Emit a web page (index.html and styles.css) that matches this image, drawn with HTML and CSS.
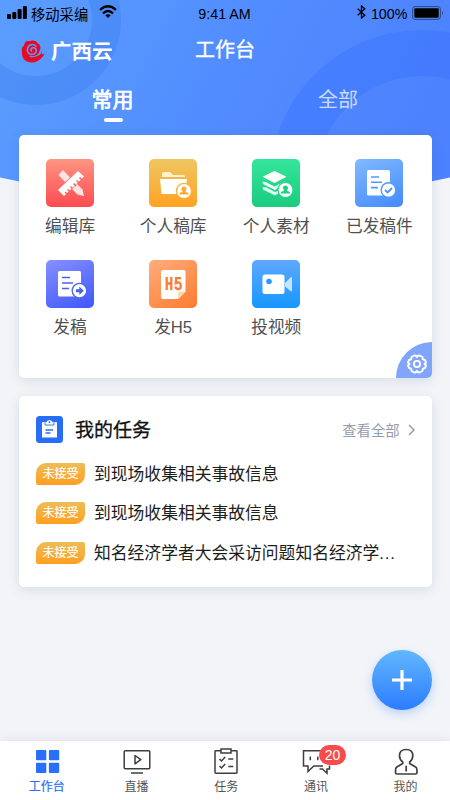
FILE: index.html
```html
<!DOCTYPE html>
<html lang="zh-CN">
<head>
<meta charset="utf-8">
<title>工作台</title>
<link rel="stylesheet" href="styles.css">
</head>
<body>
<div class="screen">
  <svg class="backdrop" viewBox="0 0 450 240" aria-hidden="true">
    <defs>
      <linearGradient id="sky" x1="0" y1="0" x2="1" y2=".25"><stop offset="0" stop-color="#5b9efe"/><stop offset=".5" stop-color="#528eff"/><stop offset="1" stop-color="#4d82fe"/></linearGradient>
      <clipPath id="curve"><path d="M0 0H450V177.500Q225 227 0 177.500Z"/></clipPath>
    </defs>
    <g clip-path="url(#curve)">
      <rect width="450" height="240" fill="url(#sky)"/>
      <circle cx="36" cy="20" r="70.500" fill="none" stroke="#3679e8" stroke-opacity=".32" stroke-width="29"/>
      <circle cx="422" cy="182" r="129" fill="none" stroke="#3470ff" stroke-opacity=".36" stroke-width="46"/>
    </g>
  </svg>

  <div class="status">
    <div class="carrier">
      <svg class="signal" width="20" height="13" viewBox="0 0 20 13"><rect y="8" width="4" height="5" rx="1"/><rect x="5.300" y="6" width="4" height="7" rx="1"/><rect x="10.600" y="3" width="4" height="10" rx="1"/><rect x="15.900" width="4" height="13" rx="1"/></svg>
      <span>移动采编</span>
      <svg class="wifi" width="18" height="13" viewBox="0 0 18 13"><g fill="none" stroke="#000" stroke-width="2.300"><path d="M1 5Q9-2.500 17 5"/><path d="M4 8.300Q9 3.700 14 8.300"/></g><path d="M6.300 10.300Q9 8 11.700 10.300L9 13Z"/></svg>
    </div>
    <span class="clock">9:41 AM</span>
    <div class="power">
      <svg width="9" height="14" viewBox="0 0 9 14"><path d="M.7 3.800L7.800 10.200L4.500 13V1L7.800 3.800L.7 10.200" fill="none" stroke="#000" stroke-width="1.300"/></svg>
      <span>100%</span>
      <svg width="32" height="14" viewBox="0 0 32 14"><rect x=".6" y=".6" width="27.800" height="12.800" rx="2.500" fill="none" stroke="#294b83"/><rect x="2.300" y="2.300" width="24.400" height="9.400" rx="1"/><path d="M30 5Q32 7 30 9Z" fill="#294b83"/></svg>
    </div>
  </div>

  <header class="titlebar">
    <div class="brand">
      <svg width="24" height="23" viewBox="0 0 24 23"><path d="M1 12C.5 9 1 6.500 3.200 5.200C3.200 2 6 .3 8.500 1.300C11-.3 15.500.2 16.500 3.200C19.500 4.500 20.300 8 18.600 10.700C18 15 13.500 16.800 9.500 15.800L6 19Q1.500 16.500 1 12Z" fill="#e60b22"/><path d="M15 6.200C12.500 3.300 7.500 4.500 6.500 8.500C5.500 12.500 9 15.500 13 14C16 12.700 16 8.500 13 7.800C10.500 7.300 9 9.500 10.500 11" fill="none" stroke="#5c9bfd" stroke-width="1.500" stroke-linecap="round"/><path d="M1 11.500C3.500 17 9 17.800 14 16.800C18 16 20.500 14 21 11.500Q21.500 13 20.500 14.500L23.500 13.500C21.500 18 17 22.500 11 22.500C4.500 22.500 0 18 1 11.500Z" fill="#e60b22"/></svg>
      <b>广西云</b>
    </div>
    <h1>工作台</h1>
  </header>

  <nav class="tabs">
    <span class="tab active">常用</span>
    <span class="tab">全部</span>
  </nav>

  <main>
    <section class="card apps">
      <div class="app"><div class="tile red">
        <svg viewBox="0 0 48 48"><g fill="#ffe4e2"><path d="M12.500 16L17 11L24 18.500L19 23Z"/><path d="M26 30L31 25L36.500 30.500L38 37L31.300 35.500Z"/></g><path d="M12 31L32 12L38 17.500L18 37Z" fill="#fff"/><path d="M20 28l2.500 2.500M23 25l2 2M26 22l2.500 2.500M29 19l2 2M32 16l2.500 2.500M17.500 30.500l2 2" transform="translate(1.500 2.500)" stroke="#fb6262" stroke-width="1.500"/></svg>
      </div><span>编辑库</span></div>
      <div class="app"><div class="tile gold">
        <svg viewBox="0 0 48 48"><path d="M13 18V14.500Q13 13 14.500 13H21L24 16H34.500Q36 16 36 18Z" fill="#fff2cf"/><path d="M11 20H38L36 35H12.500Z" fill="#fff"/><circle cx="35" cy="32" r="8.200" fill="#feb13b"/><circle cx="35" cy="32" r="6.900" fill="#fff"/><path d="M35 27.500a2.500 2.500 0 0 1 1.700 4.400v1.200q3 .5 3 2.400h-9.400q0-2 3-2.400v-1.200A2.500 2.500 0 0 1 35 27.500Z" fill="#f9ab36"/></svg>
      </div><span>个人稿库</span></div>
      <div class="app"><div class="tile green">
        <svg viewBox="0 0 48 48"><path d="M10.500 28.500L13.500 28L23 33L30 30V32L23 36.500L11 30.500Z" fill="#d8ffeb"/><path d="M10.500 22.500L13.500 23L22.500 27.500L33 22.500V24L23 31L11 25Z" fill="#f4fff9"/><path d="M22.500 12L34.500 17.800L22.500 24L10.500 17.800Z" fill="#fff"/><circle cx="33.500" cy="31" r="8.200" fill="#24d98c"/><circle cx="33.500" cy="31" r="6.900" fill="#fff"/><path d="M33.500 26.500a2.500 2.500 0 0 1 1.700 4.400v1.200q3 .5 3 2.400h-9.400q0-2 3-2.400v-1.200a2.500 2.500 0 0 1 1.700-4.400Z" fill="#1fcf83"/></svg>
      </div><span>个人素材</span></div>
      <div class="app"><div class="tile blue">
        <svg viewBox="0 0 48 48"><rect x="12" y="11" width="23" height="25.500" rx="1.500" fill="#fff"/><path d="M16 18h8M16 23.300h11M16 28.600h7" stroke="#4e99fd" stroke-width="1.600"/><circle cx="33.500" cy="31" r="8" fill="#539afd"/><circle cx="33.500" cy="31" r="6.600" fill="#fff"/><path d="M30 31l2.600 2.500L37 29" fill="none" stroke="#4992ff" stroke-width="1.800"/></svg>
      </div><span>已发稿件</span></div>
      <div class="app"><div class="tile indigo">
        <svg viewBox="0 0 48 48"><rect x="12" y="11" width="23" height="25.500" rx="1.500" fill="#fff"/><path d="M16 17.500h8M16 23h11M16 28.500h7" stroke="#4862f5" stroke-width="1.600"/><circle cx="33.500" cy="30.700" r="8" fill="#5066fa"/><circle cx="33.500" cy="30.700" r="6.600" fill="#fff"/><path d="M30 29.200h3.300v-2.700L37.700 30.700L33.300 34.900v-2.700H30Z" fill="#485ff6"/></svg>
      </div><span>发稿</span></div>
      <div class="app"><div class="tile orange">
        <svg viewBox="0 0 48 48"><path d="M14 10H35Q36.500 10 36.500 11.500V31.500L29 39H14Q12 39 12 37V12Q12 10 14 10Z" fill="#fff"/><path d="M29 39V33.500Q29 31.500 31 31.500H36.500Z" fill="#ffd9a9"/><path d="M17.700 17V30M22.300 17V30M17.700 23.500H22.300M32 18.200H27.200L26.800 23.200Q31.800 20.800 31.800 26Q31.800 29 29.300 29Q26.500 29 26.500 26.500" fill="none" stroke="#fc7b36" stroke-width="2.300"/></svg>
      </div><span>发H5</span></div>
      <div class="app"><div class="tile azure">
        <svg viewBox="0 0 48 48"><rect x="10.500" y="14.500" width="22" height="19.500" rx="2.500" fill="#fff"/><circle cx="17" cy="21.500" r="2.800" fill="#259bff"/><path d="M33 23L38.500 17.500L40 17V31.500L38.500 31L33 26.500Z" fill="#c5e5ff"/></svg>
      </div><span>投视频</span></div>
      <div class="settings"><svg width="20" height="20" viewBox="0 0 20 20" fill="none" stroke="#fff" stroke-width="1.900" stroke-linejoin="round"><path d="M7.300 1.500H8.500L10 3L11.500 1.500H12.700L15.500 3L15.800 5.300L18 6L19 8.400Q18.800 9 17.400 10Q18.800 11 19 11.600L18 14L15.800 14.700L15.500 17L12.700 18.500H11.500L10 17L8.500 18.500H7.300L4.500 17L4.200 14.700L2 14L1 11.600Q1.200 11 2.600 10Q1.200 9 1 8.400L2 6L4.200 5.300L4.500 3Z"/><circle cx="10" cy="10" r="3.100"/></svg></div>
    </section>

    <section class="card tasks">
      <div class="tasks-head">
        <svg width="27" height="27" viewBox="0 0 27 27"><rect width="27" height="27" rx="3.500" fill="#286df8"/><path d="M7 6H20Q21 6 21 7V21.500H6V7Q6 6 7 6Z" fill="#fff"/><path d="M9 5.500H10.500Q11 3.700 13.500 3.700T16.500 5.500H18V9H9Z" fill="#fff" stroke="#286df8" stroke-width=".9"/><circle cx="13.500" cy="6.200" r=".9" fill="#286df8"/><path d="M9.500 14h7.500M9.500 17h5" stroke="#286df8" stroke-width="1.300"/></svg>
        <h2>我的任务</h2>
        <span class="more">查看全部</span>
        <svg width="7" height="12" viewBox="0 0 7 12"><path d="M1 1l5 5-5 5" fill="none" stroke="#8592a9" stroke-width="1.300"/></svg>
      </div>
      <div class="task"><span class="tag">未接受</span><p>到现场收集相关事故信息</p></div>
      <div class="task"><span class="tag">未接受</span><p>到现场收集相关事故信息</p></div>
      <div class="task"><span class="tag">未接受</span><p>知名经济学者大会采访问题知名经济学<span class="dots">...</span></p></div>
    </section>
  </main>

  <div class="add"><svg width="20" height="20" viewBox="0 0 20 20"><path d="M10 0V20M0 10H20" stroke="#fff" stroke-width="3.200"/></svg></div>

  <nav class="bottom">
    <div class="item current"><svg width="30" height="28" viewBox="0 0 30 28" fill="#286ffb"><rect x="4" y="2" width="10.300" height="10.300" rx="1"/><rect x="16.900" y="2" width="10.300" height="10.300" rx="1"/><rect x="4" y="14.800" width="10.300" height="10.300" rx="1"/><rect x="16.900" y="14.800" width="10.300" height="10.300" rx="1"/></svg><span>工作台</span></div>
    <div class="item"><svg width="30" height="28" viewBox="0 0 30 28"><rect x="2.200" y="2.700" width="25.600" height="18" rx="1"/><path d="M13 7.500L18.800 11.700L13 15.800ZM9 24.900H21" stroke-linejoin="round"/></svg><span>直播</span></div>
    <div class="item"><svg width="30" height="28" viewBox="0 0 30 28"><path d="M10 2.700H4.700Q4 2.700 4 3.400V24.500Q4 25.200 4.700 25.200H25.300Q26 25.200 26 24.500V3.400Q26 2.700 25.300 2.700H20M10 1H20V5H10ZM8.500 11l2 2 3.700-4M8.500 18l2 2 3.700-4M17.300 11h5M17.300 18.500h5"/></svg><span>任务</span></div>
    <div class="item"><svg width="30" height="28" viewBox="0 0 30 28"><path d="M27.500 6V2.700H2.500V18H7V23.500L12.800 18H22M18.500 21H21.500L26 25.300V21H28.500V17.500M9.300 8.500v3.700M16.800 8.500v3.700"/></svg><span>通讯</span><em class="count">20</em></div>
    <div class="item"><svg width="30" height="28" viewBox="0 0 30 28"><path d="M11.700 14Q8.500 11.500 8.500 7.800Q8.500 1.500 15.200 1.500T21.800 7.800Q21.800 11.500 18.700 14V15.500L25 19.300Q26 20 26 23V24.500Q26 26 24.500 26H6Q4.500 26 4.500 24.500V23Q4.500 20 5.500 19.300L11.700 15.500ZM15.200 17.800V23.500" stroke-width="1.700"/></svg><span>我的</span></div>
  </nav>
</div>
</body>
</html>
```

FILE: styles.css
```css
* { box-sizing: border-box; }
body { margin: 0; font-family: "Liberation Sans", "Noto Sans CJK SC", sans-serif; }
h1, h2, p { margin: 0; font-weight: 400; }
svg { display: block; flex: none; }
.screen { position: relative; isolation: isolate; width: 450px; height: 800px; overflow: hidden; background: #f2f4f8; display: flex; flex-direction: column; }
.backdrop { position: absolute; inset: 0 auto auto 0; z-index: -1; width: 450px; height: 240px; }

.status { height: 27px; padding: 0 7px; display: grid; grid-template-columns: 1fr auto 1fr; align-items: center; font-size: 14.300px; line-height: 20px; color: #000; }
.carrier { display: flex; align-items: center; }
.carrier span { padding-top: 2px; }
.signal { margin: -3px 4px 0 0; }
.wifi { margin: -4px 0 0 11px; }
.clock { padding-right: 1px; }
.power { display: flex; align-items: center; justify-content: flex-end; gap: 4.500px; margin-right: -1px; }
.power svg:first-child { margin-top: -3px; }
.power svg:last-child { margin-top: -2px; }

.titlebar { height: 46px; display: grid; grid-template-columns: 1fr auto 1fr; align-items: center; color: #fff; }
.titlebar h1 { font-size: 20px; line-height: 28px; -webkit-text-stroke: .3px; }
.brand { display: flex; align-items: center; gap: 6px; padding: 2px 0 0 21px; }
.brand b { padding-top: 1px; font-size: 20.500px; font-weight: 700; line-height: 26px; white-space: nowrap; }

.tabs { height: 62px; display: grid; grid-template-columns: 1fr 1fr; text-align: center; color: #fff; }
.tab { display: flex; flex-direction: column; align-items: center; padding: 13px 0 0 1px; font-size: 20px; line-height: 28px; opacity: .72; }
.tab.active { padding-left: 0; opacity: 1; font-size: 21px; -webkit-text-stroke: .7px; }
.tab.active::after { content: ""; width: 19px; height: 4px; margin: 4px 0 0 1px; border-radius: 2px; background: #fff; }

main { padding: 0 18.500px; display: flex; flex-direction: column; gap: 18px; }
.card { background: #fff; border-radius: 5px; box-shadow: 0 3px 12px rgba(50, 70, 115, .13); }
.apps { position: relative; height: 243px; padding: 24px 0 0; display: grid; grid-template-columns: repeat(4, 103.100px); grid-auto-rows: 101px; align-content: start; }
.app { display: flex; flex-direction: column; align-items: center; gap: 8px; font-size: 16.700px; line-height: 24px; color: #505050; white-space: nowrap; }
.tile { width: 48px; height: 48px; border-radius: 5px; }
.red { background: linear-gradient(#fd9582, #fd4b51); }
.gold { background: linear-gradient(#efc661, #ffa323); }
.green { background: linear-gradient(#34e69b, #1bcb7e); }
.blue { background: linear-gradient(155deg, #82baff, #4289fb); }
.indigo { background: linear-gradient(155deg, #8790ff, #3d57fa); }
.orange { background: linear-gradient(145deg, #ffad7c, #fd7b2f); }
.azure { background: linear-gradient(#5fa8ff, #1697ff); }
.settings { position: absolute; right: 0; bottom: 0; width: 36px; height: 36px; padding: 12px 0 0 11px; border-radius: 36px 0 5px 0; background: #80a5fc; }

.tasks { height: 191px; padding: 20px 17px 0 17.500px; }
.tasks-head { display: flex; align-items: center; height: 27px; margin-bottom: 11px; }
.tasks-head h2 { margin: 1px 0 0 12px; flex: 1; font-size: 19px; line-height: 27px; -webkit-text-stroke: .3px; color: #111; }
.more { margin-right: 8px; font-size: 14.300px; color: #929caf; }
.task { display: flex; align-items: center; height: 39.500px; gap: 9px; }
.task p { padding-top: 2px; font-size: 16.800px; line-height: 26px; color: #1d1d1d; white-space: nowrap; }
.dots { letter-spacing: .8px; }
.tag { width: 49px; height: 22px; border-radius: 10px 2px 10px 2px; background: linear-gradient(#edbd57, #ff9f20); color: #fff; font-size: 12px; line-height: 22px; text-align: center; -webkit-text-stroke: .2px; }

.add { position: absolute; left: 372px; top: 650px; width: 60px; height: 60px; border-radius: 50%; display: grid; place-items: center; background: linear-gradient(#63b7fe, #2b7dff); box-shadow: 0 4px 10px rgba(50, 125, 255, .28); }

.bottom { margin-top: auto; height: 59px; padding: 7px 0 0 2px; background: #fff; box-shadow: 0 -2px 10px rgba(50, 70, 115, .08); display: grid; grid-template-columns: repeat(5, 89.700px); }
.item { position: relative; display: flex; flex-direction: column; align-items: center; gap: 3px; font-size: 12px; line-height: 17px; color: #555; }
.item svg { fill: none; stroke: #3f3f3f; stroke-width: 1.500; }
.item.current { color: #286ffb; -webkit-text-stroke: .2px; }
.item.current svg { fill: #286ffb; stroke: none; }
.count { position: absolute; left: 48px; top: -3px; width: 27px; height: 20px; border-radius: 10px; background: #fa4b4b; color: #fff; font-style: normal; font-size: 14px; line-height: 21px; text-align: center; }
```
